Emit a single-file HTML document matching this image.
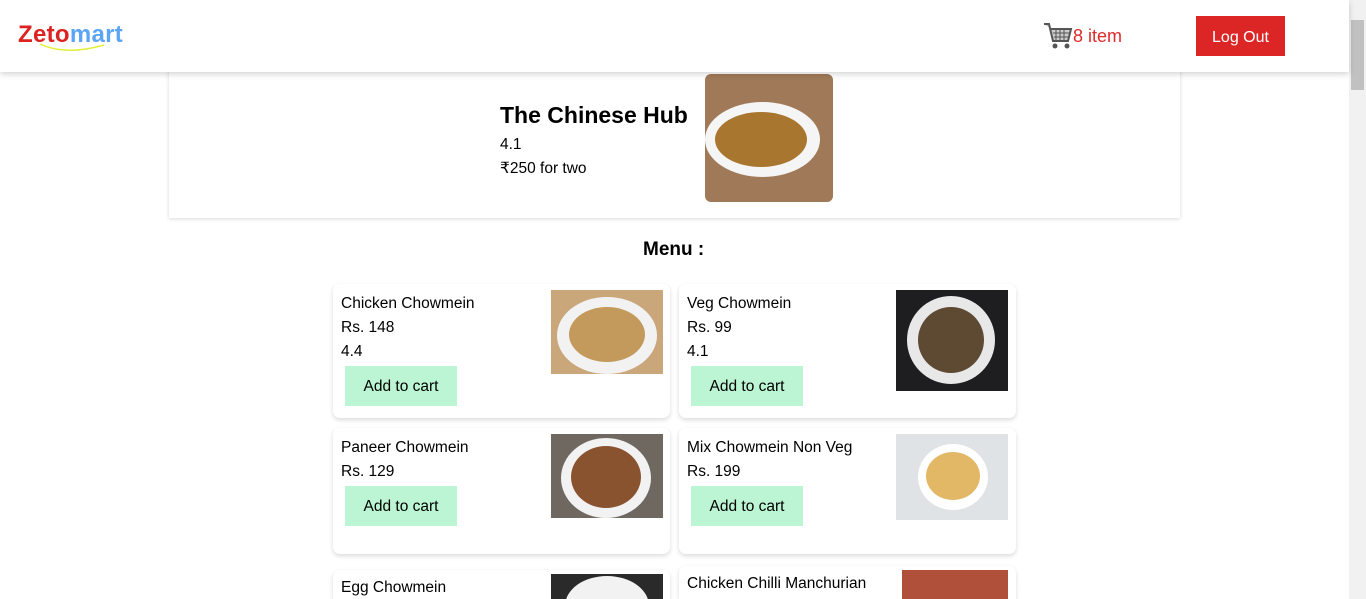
<!DOCTYPE html>
<html><head><meta charset="utf-8"><style>
*{margin:0;padding:0;box-sizing:border-box}
html,body{width:1366px;height:599px;overflow:hidden}
body{background:#fff;font-family:"Liberation Sans",sans-serif;position:relative;color:#000}
.a{position:absolute}
.hdr{left:0;top:0;width:1349px;height:72px;background:#fff;box-shadow:0 2px 6px rgba(0,0,0,.18);z-index:2}
.card{background:#fff;border-radius:7px;box-shadow:0 2px 5px rgba(0,0,0,.15);overflow:hidden}
.t{font-size:15.5px;line-height:24px;margin-top:2px}
.btn{background:#bbf5d3;font-size:15.5px;width:112px;height:40px;line-height:42px;text-align:center}
.plate{position:absolute;border-radius:50%;background:#f2f2f2}
.food{position:absolute;border-radius:50%;background:#b9874a}
.im{overflow:hidden}
</style></head><body>
<div class="a hdr">
 <div class="a" style="left:18px;top:21px;font-size:24px;font-weight:bold;letter-spacing:0.3px"><span style="color:#dd2222">Zeto</span><span style="color:#5ca4f6">mart</span></div>
 <svg class="a" style="left:36px;top:42px" width="70" height="12"><path d="M4 2 Q30 14 68 3" stroke="#e3f03a" stroke-width="1.5" fill="none"/></svg>
 <svg class="a" style="left:1043px;top:21px" width="30" height="30" viewBox="0 0 30 30"><path d="M1 3h5l4 17h15l3-12H8" stroke="#555" stroke-width="2" fill="#ccc"/><path d="M10 12h16M11 16h14M13 8v12M17 8v12M21 8v12" stroke="#555" stroke-width="1"/><circle cx="12" cy="25" r="2.5" fill="#555"/><circle cx="24" cy="25" r="2.5" fill="#555"/></svg>
 <div class="a" style="left:1073px;top:26px;font-size:18px;color:#dd2a2a">8 item</div>
 <div class="a" style="left:1196px;top:16px;width:89px;height:40px;background:#dc2626;color:#fff;font-size:16px;line-height:43px;text-align:center">Log Out</div>
</div>
<div class="a" style="left:1349px;top:0;width:17px;height:599px;background:#f1f1f1"><div class="a" style="left:2px;top:20px;width:13px;height:70px;background:#c1c1c1"></div></div>
<div class="a" style="left:169px;top:60px;width:1011px;height:158px;background:#fff;box-shadow:0 1px 4px rgba(0,0,0,.15)"></div>
<div class="a" style="left:500px;top:102px;font-size:23px;font-weight:bold">The Chinese Hub</div>
<div class="a t" style="left:500px;top:131px">4.1</div>
<div class="a t" style="left:500px;top:155px">₹250 for two</div>
<div class="a" style="left:705px;top:74px;width:128px;height:128px;border-radius:6px;background:#a07a58;overflow:hidden"><div class="plate" style="left:0;top:28px;width:115px;height:75px;background:#f5f5f5"></div><div class="food" style="left:10px;top:38px;width:92px;height:55px;background:#a9762f"></div></div>
<div class="a" style="left:643px;top:239px;font-size:19px;font-weight:bold">Menu :</div>

<div class="a card" style="left:333px;top:284px;width:337px;height:134px"></div>
<div class="a card" style="left:679px;top:284px;width:337px;height:134px"></div>
<div class="a card" style="left:333px;top:428px;width:337px;height:126px"></div>
<div class="a card" style="left:679px;top:428px;width:337px;height:126px"></div>
<div class="a card" style="left:333px;top:570px;width:337px;height:29px;border-radius:7px 7px 0 0"></div>
<div class="a card" style="left:679px;top:566px;width:337px;height:33px;border-radius:7px 7px 0 0"></div>

<div class="a t" style="left:341px;top:290px">Chicken Chowmein</div>
<div class="a t" style="left:341px;top:314px">Rs. 148</div>
<div class="a t" style="left:341px;top:338px">4.4</div>
<div class="a btn" style="left:345px;top:366px">Add to cart</div>
<div class="a im" style="left:551px;top:290px;width:112px;height:84px;background:#c9a77a"><div class="plate" style="left:6px;top:7px;width:100px;height:77px"></div><div class="food" style="left:18px;top:17px;width:76px;height:55px;background:#c49a5c"></div></div>

<div class="a t" style="left:687px;top:290px">Veg Chowmein</div>
<div class="a t" style="left:687px;top:314px">Rs. 99</div>
<div class="a t" style="left:687px;top:338px">4.1</div>
<div class="a btn" style="left:691px;top:366px">Add to cart</div>
<div class="a im" style="left:896px;top:290px;width:112px;height:101px;background:#1e1e20"><div class="plate" style="left:11px;top:6px;width:88px;height:88px;background:#e8e8e8"></div><div class="food" style="left:22px;top:17px;width:66px;height:66px;background:#5e4a32"></div></div>

<div class="a t" style="left:341px;top:434px">Paneer Chowmein</div>
<div class="a t" style="left:341px;top:458px">Rs. 129</div>
<div class="a btn" style="left:345px;top:486px">Add to cart</div>
<div class="a im" style="left:551px;top:434px;width:112px;height:84px;background:#6f6860"><div class="plate" style="left:10px;top:4px;width:90px;height:80px"></div><div class="food" style="left:20px;top:12px;width:70px;height:62px;background:#8a5330"></div></div>

<div class="a t" style="left:687px;top:434px">Mix Chowmein Non Veg</div>
<div class="a t" style="left:687px;top:458px">Rs. 199</div>
<div class="a btn" style="left:691px;top:486px">Add to cart</div>
<div class="a im" style="left:896px;top:434px;width:112px;height:86px;background:#dfe3e6"><div class="plate" style="left:22px;top:10px;width:70px;height:66px;background:#fff"></div><div class="food" style="left:30px;top:18px;width:54px;height:48px;background:#e2b866"></div></div>

<div class="a t" style="left:341px;top:574px">Egg Chowmein</div>
<div class="a im" style="left:551px;top:574px;width:112px;height:25px;background:#2a2a2a"><div class="plate" style="left:14px;top:2px;width:84px;height:60px"></div></div>
<div class="a t" style="left:687px;top:570px">Chicken Chilli Manchurian</div>
<div class="a" style="left:902px;top:570px;width:106px;height:29px;background:#b0503a"></div>
</body></html>
